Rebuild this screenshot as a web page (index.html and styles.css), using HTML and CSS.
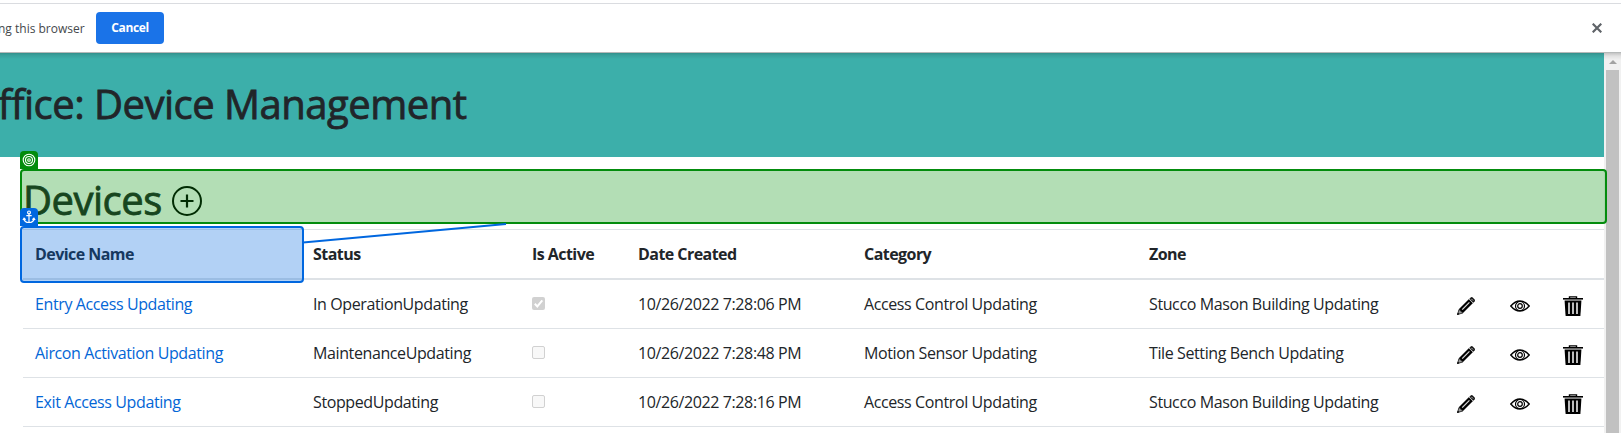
FILE: index.html
```html
<!DOCTYPE html>
<html lang="en">
<head>
<meta charset="utf-8">
<title>Device Management</title>
<link rel="stylesheet" href="styles.css">
</head>
<body>
<svg class="defs" aria-hidden="true">
  <symbol id="pencil" viewBox="0 0 20 20">
    <path d="M1.5 18.5 3 13 13 3l4 4L7 17z" fill="#000"/>
    <path d="m1.5 18.5 1.5-5L6.8 17z" fill="#999" stroke="#222" stroke-width=".7"/>
    <path d="m1 19 .8-2.5 1.7 1.7z" fill="#000"/>
    <path d="m6.2 13.6 7.2-7.2" stroke="#ddd" stroke-width="1.2"/>
    <path d="m13.4 2.8 1.3-1.3q1-.8 2 0l1.9 1.9q.8 1 0 2l-1.3 1.3z" fill="#111"/>
    <path d="m13 3.1 4 4M15.3 2.8l1.8 1.8" stroke="#bbb" stroke-width="1"/>
  </symbol>
  <symbol id="eye" viewBox="0 0 20 12">
    <path d="M.8 6Q5 1 10 1t9.2 5Q15 11 10 11T.8 6z" fill="#fff" stroke="#000" stroke-width="1.4"/>
    <circle cx="10" cy="6" r="4.5" fill="none" stroke="#000" stroke-width="1.2"/>
    <circle cx="10" cy="6" r="2.3" fill="none" stroke="#000" stroke-width="1.2"/>
  </symbol>
  <symbol id="trash" viewBox="0 0 20 20">
    <path d="M6.5 2.5V.9h7v1.6" fill="none" stroke="#000" stroke-width="1.4"/>
    <path d="M0 2h20v1.6H0z" fill="#000"/>
    <path d="M1.6 4.4h16.8L17.4 20H2.6z" fill="#000"/>
    <path d="M6 6.5v11.5M10 6.5v11.5M14 6.5v11.5" stroke="#ddd" stroke-width="1.7"/>
  </symbol>
</svg>

<div class="infobar">
  <span class="infobar-text">ng this browser</span>
  <button class="cancel">Cancel</button>
  <svg class="close" viewBox="0 0 10 10"><path d="m.7.7 8.6 8.6M9.3.7.7 9.3" stroke="#5f6368" stroke-width="2.2"/></svg>
</div>

<div class="viewport">
  <main class="page">
    <header class="banner"><h1 class="banner-title">ffice: Device Management</h1></header>
    <section class="content">
      <div class="heading">
        <h2 class="heading-title">Devices</h2>
        <svg class="add" viewBox="0 0 30 30" fill="none" stroke="#000" stroke-width="2"><circle cx="15" cy="15" r="14"/><path d="M15 8.5v13M8.5 15h13" stroke-width="2.2"/></svg>
      </div>
      <div class="table">
        <div class="row head">
          <div>Device Name</div><div>Status</div><div>Is Active</div><div>Date Created</div><div>Category</div><div>Zone</div>
        </div>
        <div class="row">
          <div><a class="link">Entry Access Updating</a></div><div>In OperationUpdating</div>
          <div><span class="check checked"><svg viewBox="0 0 13 13"><path d="m2.8 6.8 2.5 2.6 5-6" fill="none" stroke="#fff" stroke-width="2"/></svg></span></div>
          <div>10/26/2022 7:28:06 PM</div><div>Access Control Updating</div><div>Stucco Mason Building Updating</div>
          <svg class="pencil"><use href="#pencil"/></svg><svg class="eye"><use href="#eye"/></svg><svg class="trash"><use href="#trash"/></svg>
        </div>
        <div class="row">
          <div><a class="link">Aircon Activation Updating</a></div><div>MaintenanceUpdating</div>
          <div><span class="check"></span></div>
          <div>10/26/2022 7:28:48 PM</div><div>Motion Sensor Updating</div><div>Tile Setting Bench Updating</div>
          <svg class="pencil"><use href="#pencil"/></svg><svg class="eye"><use href="#eye"/></svg><svg class="trash"><use href="#trash"/></svg>
        </div>
        <div class="row">
          <div><a class="link">Exit Access Updating</a></div><div>StoppedUpdating</div>
          <div><span class="check"></span></div>
          <div>10/26/2022 7:28:16 PM</div><div>Access Control Updating</div><div>Stucco Mason Building Updating</div>
          <svg class="pencil"><use href="#pencil"/></svg><svg class="eye"><use href="#eye"/></svg><svg class="trash"><use href="#trash"/></svg>
        </div>
      </div>
    </section>
  </main>
  <div class="scrollbar"><span class="arrow"></span><span class="thumb"></span></div>
</div>

<div class="mark target"></div>
<div class="badge target-badge">
  <svg viewBox="0 0 14 14" fill="none" stroke="#fff" stroke-width="1.1"><circle cx="7" cy="7" r="5.8"/><circle cx="7" cy="7" r="3.5"/><circle cx="7" cy="7" r="1.3"/></svg>
</div>
<svg class="connector" viewBox="0 0 204 22"><path d="M0 19.5 203 1" stroke="#0067df" stroke-width="2"/></svg>
<div class="mark anchor"></div>
<div class="badge anchor-badge">
  <svg viewBox="0 0 14 14" fill="none" stroke="#fff" stroke-width="1.2"><circle cx="7" cy="2.4" r="1.4"/><path d="M7 3.8v8.7M4.3 5.6h5.4M2 8.6q.4 3.9 5 3.9t5-3.9M.9 10l1.2-1.8 1.6 1.4M13.1 10l-1.2-1.8-1.6 1.4"/></svg>
</div>
</body>
</html>
```
FILE: styles.css
```css
* { box-sizing: border-box; }
body {
  margin: 0;
  height: 433px;
  overflow: hidden;
  position: relative;
  background: #fff;
  color: #212529;
  font: 16px/24px "Open Sans", "Noto Sans", sans-serif;
}
.defs { display: none; }

.infobar {
  display: flex;
  align-items: center;
  height: 50px;
  margin-top: 3px;
  padding-right: 19px;
  border-top: 1px solid #dadce0;
  border-bottom: 1px solid #b6b9b9;
}
.infobar-text {
  width: 84px;
  margin: 1px 12px 0 0;
  white-space: nowrap;
  font-size: 12px;
  color: #45484c;
  text-indent: -2px;
}
.cancel {
  width: 68px;
  height: 32px;
  padding: 0 0 1px;
  border: 0;
  border-radius: 4px;
  background: #1a73e8;
  color: #fff;
  font: bold 12px "Open Sans", sans-serif;
  letter-spacing: -.4px;
}
.close { width: 10px; height: 10px; margin-left: auto; }

.viewport { display: flex; height: 380px; }
.page { flex: 1; min-width: 0; }
.banner {
  display: flex;
  align-items: center;
  height: 104px;
  padding-bottom: 3px;
  background: linear-gradient(#328f8b 0, #389f9b 2px, #3cafaa 6px);
}
.banner-title, .heading-title {
  margin: 0;
  font-size: 40px;
  font-weight: 500;
  line-height: 48px;
  letter-spacing: -.5px;
  -webkit-text-stroke: .8px currentColor;
  white-space: nowrap;
}
.banner-title { margin-left: -2px; }
.content { padding: 14px 0 0 23px; }
.heading { display: flex; align-items: center; height: 58px; }
.heading-title { margin-top: -1px; }
.add { width: 30px; height: 30px; margin: 2px 0 0 10px; }

.row {
  display: grid;
  grid-template-columns: 278px 219px 106px 226px 285px 302px 54px 54px 57px;
  align-items: center;
  height: 49px;
  border-bottom: 1px solid #dee2e6;
  letter-spacing: -.39px;
  white-space: nowrap;
}
.row > div { padding-left: 12px; }
.head {
  height: 51px;
  border-top: 1px solid #dee2e6;
  border-bottom-width: 2px;
  font-weight: bold;
  letter-spacing: -.55px;
}
.link { color: #0366d6; }
.check {
  display: block;
  width: 13px;
  height: 13px;
  margin-bottom: 2px;
  border: 1px solid #d1d1d1;
  border-radius: 2px;
  background: #f8f8f8;
}
.checked { border: 0; background: #d1d1d1; }
.check svg { display: block; }
.pencil, .eye, .trash { justify-self: center; margin-top: 3px; }
.pencil { width: 20px; height: 20px; }
.eye { width: 20px; height: 12px; }
.trash { width: 20px; height: 20px; margin-right: 5px; }

.scrollbar {
  display: flex;
  flex-direction: column;
  align-items: center;
  width: 17px;
  background: linear-gradient(#c4c4c4 0, #e1e1e1 3px, #f1f1f1 7px);
}
.arrow {
  margin: 7px 0 6px;
  border: solid transparent;
  border-width: 0 4px 4px;
  border-bottom-color: #a3a3a3;
}
.thumb { width: 13px; flex: 1; background: #c1c1c1; }

/* Selection overlays drawn above the page */
.mark { position: absolute; left: 20px; border: 2px solid; border-radius: 4px; }
.target {
  top: 169px;
  width: 1587px;
  height: 55px;
  border-color: #038c0d;
  background: rgba(3, 145, 10, .3);
}
.anchor {
  top: 226px;
  width: 284px;
  height: 57px;
  border-color: #0067df;
  background: rgba(0, 103, 223, .3);
}
.badge {
  position: absolute;
  left: 20px;
  width: 18px;
  height: 18px;
  padding: 2px;
  border-radius: 4px 4px 0 0;
}
.badge svg { display: block; }
.target-badge { top: 151px; background: #038c0d; }
.anchor-badge { top: 208px; background: #0067df; }
.connector { position: absolute; left: 303px; top: 223px; width: 204px; height: 22px; }
```
